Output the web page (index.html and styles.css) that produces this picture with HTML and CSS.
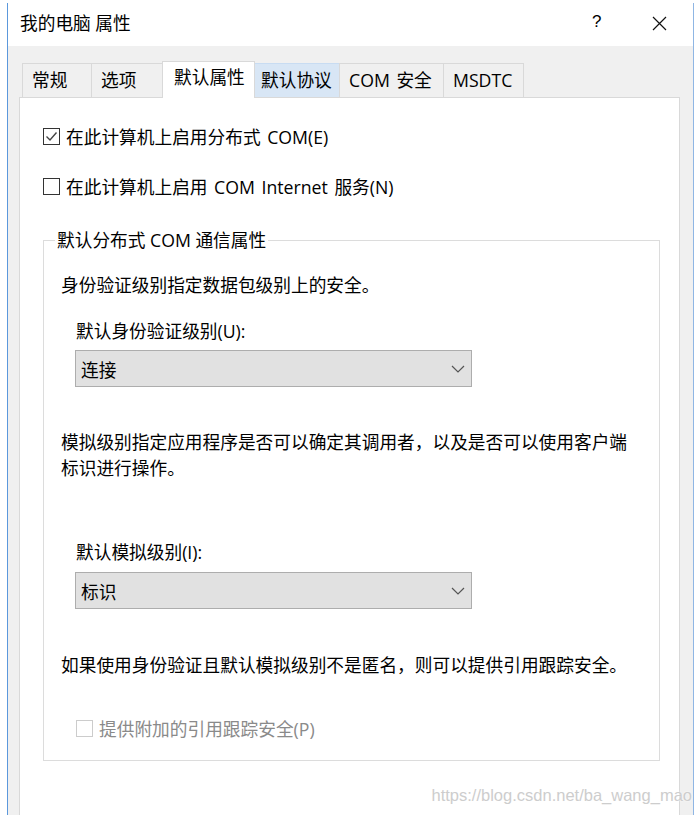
FILE: index.html
```html
<!DOCTYPE html>
<html lang="zh-CN">
<head>
<meta charset="utf-8">
<title>我的电脑 属性</title>
<link rel="stylesheet" href="styles.css">
</head>
<body>
<div class="window">
  <div class="titlebar">
    <span class="title">我的电脑 属性</span>
    <span class="help">?</span>
    <span class="close">
      <svg width="15" height="15" viewBox="0 0 15 15"><path d="M1 1 L14 14 M14 1 L1 14" stroke="#111" stroke-width="1.2" fill="none"/></svg>
    </span>
  </div>
  <div class="tabs">
    <div class="tab t1">常规</div>
    <div class="tab t2">选项</div>
    <div class="tab t3 active">默认属性</div>
    <div class="tab t4 hover">默认协议</div>
    <div class="tab t5">COM 安全</div>
    <div class="tab t6">MSDTC</div>
  </div>
  <div class="panel">
    <div class="check-row row1">
      <span class="box checked">
        <svg width="15" height="15" viewBox="0 0 15 15"><path d="M2.5 7.5 L6 11 L12.5 3.5" stroke="#444" stroke-width="1.4" fill="none"/></svg>
      </span>
      <span>在此计算机上启用分布式 COM(E)</span>
    </div>
    <div class="check-row row2">
      <span class="box"></span>
      <span>在此计算机上启用 COM Internet 服务(N)</span>
    </div>
    <fieldset class="group">
      <legend>默认分布式 COM 通信属性</legend>
      <div class="group-body">
        <p class="desc d1">身份验证级别指定数据包级别上的安全。</p>
        <p class="label l1">默认身份验证级别(U):</p>
        <div class="select s1">
          <span>连接</span>
          <svg width="14" height="8" viewBox="0 0 14 8"><path d="M1 1 L7 7 L13 1" stroke="#555" stroke-width="1.2" fill="none"/></svg>
        </div>
        <p class="desc d2">模拟级别指定应用程序是否可以确定其调用者，以及是否可以使用客户端<br>标识进行操作。</p>
        <p class="label l2">默认模拟级别(I):</p>
        <div class="select s2">
          <span>标识</span>
          <svg width="14" height="8" viewBox="0 0 14 8"><path d="M1 1 L7 7 L13 1" stroke="#555" stroke-width="1.2" fill="none"/></svg>
        </div>
        <p class="desc d3">如果使用身份验证且默认模拟级别不是匿名，则可以提供引用跟踪安全。</p>
        <div class="check-row disabled">
          <span class="box"></span>
          <span>提供附加的引用跟踪安全(P)</span>
        </div>
      </div>
    </fieldset>
  </div>
  <div class="watermark">https://blog.csdn.net/ba_wang_mao</div>
</div>
</body>
</html>
```

FILE: styles.css
```css
html, body {
  margin: 0;
  padding: 0;
  background: #ffffff;
  height: 815px;
  overflow: hidden;
}
body {
  font-family: "Open Sans", "Noto Sans CJK SC", sans-serif;
  font-size: 17.7px;
  color: #000;
}
.window {
  position: relative;
  margin: 3px 0 0 7px;
  width: 687px;
  height: 812px;
  box-sizing: border-box;
  border-left: 1px solid #5b98dc;
  border-right: 1px solid #8fb6e4;
  background: #f0f0f0;
}
.titlebar {
  height: 43px;
  box-sizing: border-box;
  background: #fff;
  display: flex;
  align-items: center;
  padding: 0 0 6px 12px;
}
.title {
  flex: 1;
  font-size: 17.7px;
}
.help {
  width: 60px;
  font-family: "Liberation Sans", sans-serif;
  font-size: 17px;
}
.close {
  width: 41px;
  display: flex;
  align-items: center;
  padding-top: 3px;
}
.tabs {
  display: flex;
  align-items: flex-end;
  margin-top: 15px;
  padding-left: 14px;
  height: 36px;
  position: relative;
  z-index: 2;
}
.tab {
  box-sizing: border-box;
  height: 34px;
  border: 1px solid #d9d9d9;
  border-bottom: none;
  margin-right: -1px;
  background: #f0f0f0;
  display: flex;
  align-items: center;
  padding-left: 9px;
  line-height: 1;
  white-space: nowrap;
}
.t1 { width: 70px; }
.t2 { width: 72px; }
.t3 { width: 93px; }
.t4 { width: 86px; padding-left: 6px; }
.t5 { width: 105px; word-spacing: 2px; }
.t6 { width: 81px; }
.tab.active {
  height: 37px;
  margin-bottom: -1px;
  background: #fff;
  padding-left: 11px;
  padding-bottom: 4px;
  z-index: 3;
}
.tab.hover {
  background: #d8e6f5;
  border-color: #c8dcf2;
}
.panel {
  position: relative;
  z-index: 1;
  margin-left: 11px;
  width: 661px;
  height: 740px;
  box-sizing: border-box;
  background: #fff;
  border: 1px solid #d9d9d9;
  padding: 26px 0 0 23px;
}
.check-row {
  display: flex;
  align-items: center;
  height: 24px;
  gap: 6px;
  white-space: nowrap;
  word-spacing: 2px;
}
.row2 { margin-top: 26px; }
.box {
  width: 17px;
  height: 17px;
  flex: none;
  box-sizing: border-box;
  border: 1px solid #333;
  background: #fff;
  display: flex;
  align-items: center;
  justify-content: center;
}
.group {
  margin: 32px 0 0 0;
  width: 617px;
  box-sizing: border-box;
  border: 1px solid #dcdcdc;
  padding: 0;
  min-width: 0;
}
.group legend {
  margin-left: 11px;
  padding: 0 2px;
  line-height: 20px;
}
.group-body {
  padding: 23px 0 20px 17px;
}
.desc {
  margin: 0;
  line-height: 24px;
  white-space: nowrap;
}
.d2 {
  margin-top: 42px;
  line-height: 26px;
}
.d3 { margin-top: 44px; }
.label {
  margin: 22px 0 0 15px;
  line-height: 24px;
}
.l2 { margin-top: 59px; }
.select {
  margin: 7px 0 0 14px;
  width: 397px;
  height: 37px;
  box-sizing: border-box;
  background: #e1e1e1;
  border: 1px solid #adadad;
  display: flex;
  align-items: center;
  justify-content: space-between;
  padding: 0 6px 0 5px;
}
.s2 { margin-top: 8px; }
.check-row.disabled {
  margin: 39px 0 0 15px;
  color: #8a8a8a;
}
.check-row.disabled .box {
  border-color: #cccccc;
}
.watermark {
  position: absolute;
  z-index: 5;
  right: 1px;
  top: 783px;
  font-family: "Liberation Sans", sans-serif;
  font-size: 16.5px;
  color: #cdcdcd;
  text-shadow: 0 0 2px #fff;
}
```
